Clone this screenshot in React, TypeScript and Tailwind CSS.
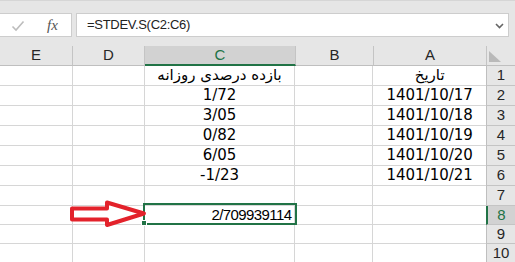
import React from "react";

const colW = ["w-[73px]", "w-[72px]", "w-[151px]", "w-[78px]", "w-[113px]"];
const colLabels = ["E", "D", "C", "B", "A"];

type Row = { n: number; c?: string; a?: string; h: string; cRight?: boolean };

const rows: Row[] = [
  { n: 1, c: "بازده درصدی روزانه", a: "تاریخ", h: "h-[20px]" },
  { n: 2, c: "1/72", a: "1401/10/17", h: "h-[20px]" },
  { n: 3, c: "3/05", a: "1401/10/18", h: "h-[20px]" },
  { n: 4, c: "0/82", a: "1401/10/19", h: "h-[20px]" },
  { n: 5, c: "6/05", a: "1401/10/20", h: "h-[20px]" },
  { n: 6, c: "-1/23", a: "1401/10/21", h: "h-[20px]" },
  { n: 7, h: "h-[20px]" },
  { n: 8, c: "2/709939114", h: "h-[19px]", cRight: true },
  { n: 9, h: "h-[19px]" },
  { n: 10, h: "h-[19px]" },
];

export default function App() {
  return (
    <div
      className="relative w-[515px] h-[262px] overflow-hidden bg-[#e6e6e6]"
      style={{ fontFamily: '"Liberation Sans", Arial, sans-serif' }}
    >
      {/* formula bar */}
      <div className="h-[46px] flex items-start pt-[12px] border-t border-[#d6d6d6]">
        <div className="w-[72px] h-[24px] bg-white border-y border-r border-[#cdcdcd] flex items-center">
          <svg width="14" height="12" viewBox="0 0 14 12" className="ml-[11px] mt-[2px]">
            <path d="M1.5 6.5 L5 10 L12.5 1.5" fill="none" stroke="#bdbdbd" strokeWidth="1.6" />
          </svg>
          <span
            className="ml-[22px] text-[15px] italic text-[#555] leading-none"
            style={{ fontFamily: '"Liberation Serif", "Times New Roman", serif' }}
          >
            fx
          </span>
        </div>
        <div className="ml-[4px] w-[433px] h-[24px] bg-white border border-[#cdcdcd] flex items-center relative">
          <span className="ml-[10px] text-[13px] text-[#222] tracking-[-0.3px]">=STDEV.S(C2:C6)</span>
          <svg width="9" height="6" viewBox="0 0 9 6" className="absolute right-[4px] top-[9px]">
            <path d="M1 1 L4.5 4.5 L8 1" fill="none" stroke="#666" strokeWidth="1.6" />
          </svg>
        </div>
      </div>

      {/* column headers */}
      <div className="flex h-[20px] bg-[#e6e6e6]">
        {colLabels.map((l, i) => (
          <div
            key={l}
            className={`${colW[i]} h-full flex items-center justify-center text-[15px] border-r border-[#c4c4c4] ${
              l === "C"
                ? "bg-[#d2d2d2] text-[#217346] border-b-2 border-b-[#217346]"
                : "text-[#262626] border-b border-b-[#bfbfbf]"
            }`}
          >
            {l}
          </div>
        ))}
        <div className="w-[28px] h-full border-b border-[#bfbfbf] relative">
          <svg width="12" height="11" viewBox="0 0 12 11" className="absolute left-[2px] top-[5px]">
            <path d="M0 0 L0 11 L12 11 Z" fill="#b9b9b9" />
          </svg>
        </div>
      </div>

      {/* rows */}
      {rows.map((r) => (
        <div key={r.n} className={`flex ${r.h} bg-white`}>
          <div className="w-[73px] h-full border-r border-b border-[#d6d6d6]" />
          <div className="w-[72px] h-full border-r border-b border-[#d6d6d6]" />
          <div
            className={`w-[151px] h-full border-r border-b border-[#d6d6d6] flex items-center text-black ${
              r.cRight ? "justify-end pr-[3px] text-[15px]" : "justify-center text-[15px]"
            }`}
            style={
              r.cRight
                ? { fontFamily: '"Liberation Sans", Arial, sans-serif', letterSpacing: "-0.6px" }
                : { fontFamily: '"DejaVu Sans", sans-serif' }
            }
            dir={r.n === 1 ? "rtl" : "ltr"}
          >
            {r.c}
          </div>
          <div className="w-[78px] h-full border-r border-b border-[#d6d6d6]" />
          <div
            className="w-[113px] h-full border-b border-[#d6d6d6] flex items-center justify-center text-[15px] text-black"
            style={{ fontFamily: '"DejaVu Sans", sans-serif' }}
            dir={r.n === 1 ? "rtl" : "ltr"}
          >
            {r.a}
          </div>
          <div
            className={`w-[29px] h-full border-b border-[#c4c4c4] flex items-center justify-center text-[15px] ${
              r.n === 8
                ? "bg-[#d2d2d2] text-[#217346] border-l-2 border-l-[#217346]"
                : "bg-[#e6e6e6] text-[#262626] border-l border-l-[#bfbfbf]"
            }`}
          >
            {r.n}
          </div>
        </div>
      ))}

      {/* selection box on C8 */}
      <div className="absolute left-[143px] top-[203px] w-[154px] h-[22px] border-2 border-[#217346] pointer-events-none" />
      <div className="absolute left-[141px] top-[220px] w-[6px] h-[6px] bg-[#217346] border border-white" />

      {/* red arrow */}
      <svg width="90" height="34" viewBox="0 0 90 34" className="absolute left-[66px] top-[198px]">
        <polygon
          points="6,10.5 41,10.5 41,4.5 78,15.5 41,27 41,21.5 6,21.5"
          fill="#ffffff"
          stroke="#e3222b"
          strokeWidth="4"
          strokeLinejoin="round"
        />
      </svg>
    </div>
  );
}
